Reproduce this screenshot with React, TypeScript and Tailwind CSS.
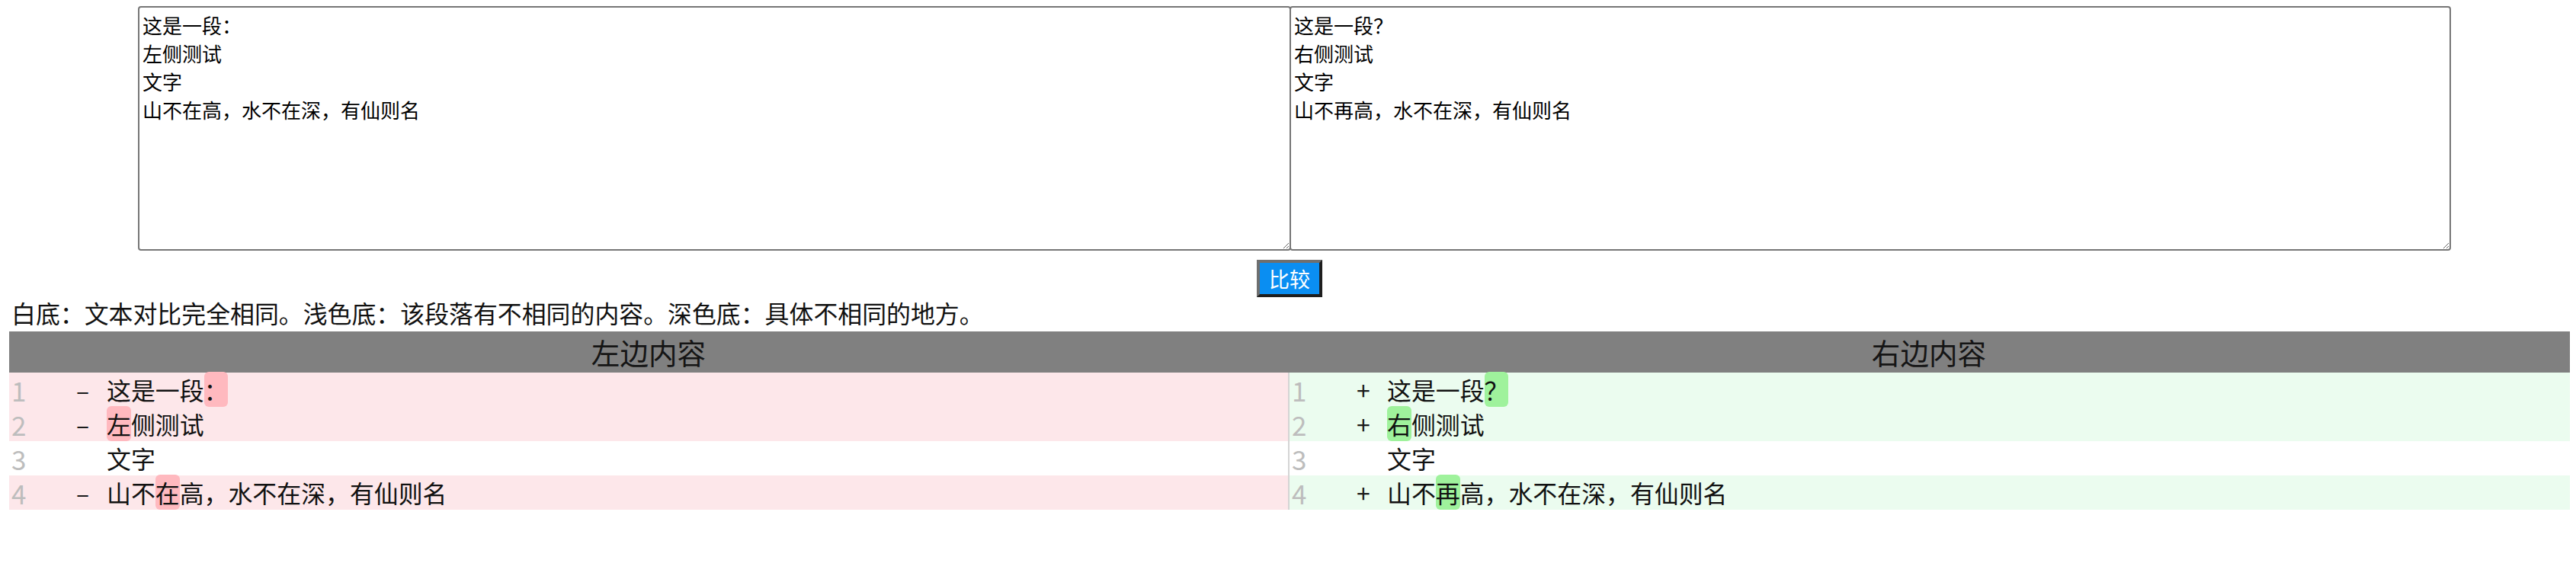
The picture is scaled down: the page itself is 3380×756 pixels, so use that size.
import React from 'react';

type Piece = { text: string; hl?: boolean };
type Line = { num: number; changed: boolean; pieces: Piece[] };

const LEFT_TEXT = '这是一段：\n左侧测试\n文字\n山不在高，水不在深，有仙则名';
const RIGHT_TEXT = '这是一段？\n右侧测试\n文字\n山不再高，水不在深，有仙则名';

const leftLines: Line[] = [
  { num: 1, changed: true, pieces: [{ text: '这是一段' }, { text: '：', hl: true }] },
  { num: 2, changed: true, pieces: [{ text: '左', hl: true }, { text: '侧测试' }] },
  { num: 3, changed: false, pieces: [{ text: '文字' }] },
  { num: 4, changed: true, pieces: [{ text: '山不' }, { text: '在', hl: true }, { text: '高，水不在深，有仙则名' }] },
];

const rightLines: Line[] = [
  { num: 1, changed: true, pieces: [{ text: '这是一段' }, { text: '？', hl: true }] },
  { num: 2, changed: true, pieces: [{ text: '右', hl: true }, { text: '侧测试' }] },
  { num: 3, changed: false, pieces: [{ text: '文字' }] },
  { num: 4, changed: true, pieces: [{ text: '山不' }, { text: '再', hl: true }, { text: '高，水不在深，有仙则名' }] },
];

const DiffRow: React.FC<{ line: Line; side: 'left' | 'right' }> = ({ line, side }) => {
  const rowBg = line.changed ? (side === 'left' ? 'bg-[#fde7ea]' : 'bg-[#ebfcef]') : 'bg-white';
  const hlBg = side === 'left' ? 'bg-[#ffb9bf]' : 'bg-[#9ff29c]';
  return (
    <div className={`flex h-[45px] items-center leading-[45px] ${rowBg}`}>
      <span className="w-[88px] shrink-0 pl-[3px] text-[35px] text-[#bdbdbd]">{line.num}</span>
      <span className="w-[40px] shrink-0 text-[#1a1a1a]">{line.changed ? (side === 'left' ? '–' : '+') : ''}</span>
      <span className="whitespace-pre text-[#111]">
        {line.pieces.map((p, i) =>
          p.hl ? (
            <span key={i} className={`rounded-[6px] ${hlBg}`}>
              {p.text}
            </span>
          ) : (
            <span key={i}>{p.text}</span>
          )
        )}
      </span>
    </div>
  );
};

export default function App() {
  return (
    <div className="w-[3380px] min-h-[756px] bg-white font-['Noto_Sans_CJK_SC','Noto_Sans',sans-serif] text-black">
      {/* Input areas */}
      <div className="flex pt-[8px] pl-[181px]">
        <textarea
          defaultValue={LEFT_TEXT}
          className="box-border h-[321px] w-[1513px] resize rounded-[4px] border-2 border-[#767676] p-[4px] text-[26px] leading-[37px] text-black outline-none"
        />
        <textarea
          defaultValue={RIGHT_TEXT}
          className="-ml-[2px] box-border h-[321px] w-[1524px] resize rounded-[4px] border-2 border-[#767676] p-[4px] text-[26px] leading-[37px] text-black outline-none"
        />
      </div>

      {/* Compare button */}
      <div className="mt-[12px] flex pl-[1649px]">
        <button className="box-border h-[49px] w-[86px] border-[4px] border-t-[#6f6f6f] border-l-[#6f6f6f] border-r-[#1e1e1e] border-b-[#1e1e1e] bg-[#0a8ef2] text-[27px] leading-none text-white">
          比较
        </button>
      </div>

      {/* Legend */}
      <div className="mt-[2px] pl-[15px] text-[31.9px] leading-[36px] text-[#111]">
        白底：文本对比完全相同。浅色底：该段落有不相同的内容。深色底：具体不相同的地方。
      </div>

      {/* Result table */}
      <div className="mt-[7px] ml-[12px] w-[3360px]">
        <div className="flex h-[54px] bg-[#808080] text-[37.6px] leading-[54px] text-[#151515]">
          <div className="w-[1678px] text-center">左边内容</div>
          <div className="w-[1682px] text-center">右边内容</div>
        </div>
        <div className="flex text-[31.9px]">
          <div className="w-[1678px]">
            {leftLines.map((l) => (
              <DiffRow key={l.num} line={l} side="left" />
            ))}
          </div>
          <div className="box-border w-[1682px] border-l-2 border-[#d4d4d4]">
            {rightLines.map((l) => (
              <DiffRow key={l.num} line={l} side="right" />
            ))}
          </div>
        </div>
      </div>
    </div>
  );
}
